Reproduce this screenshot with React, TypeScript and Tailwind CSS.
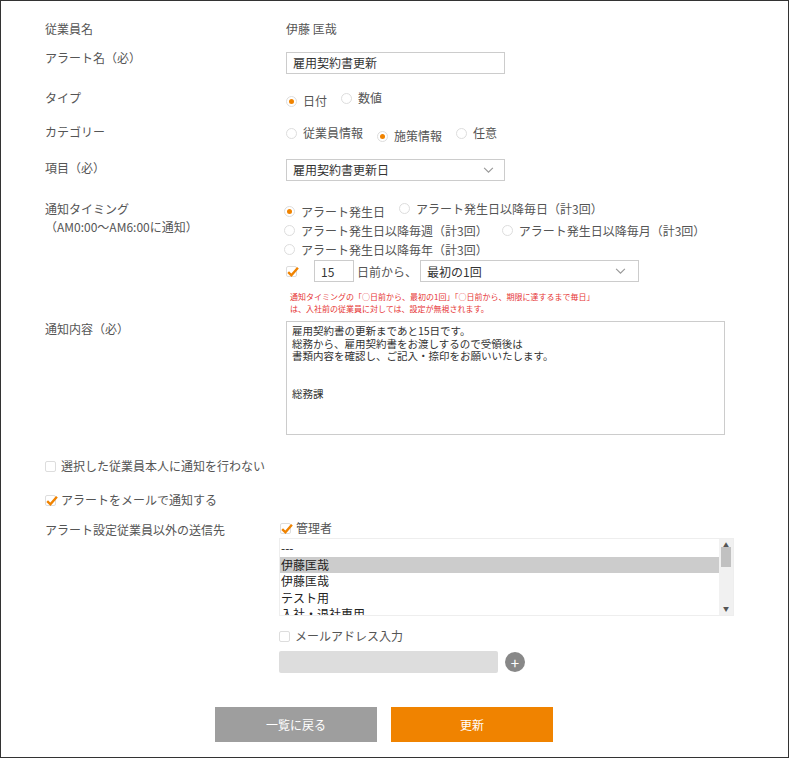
import React from 'react';

const Radio = ({ on, label }: { on?: boolean; label: string }) => (
  <span className="inline-flex items-center gap-[6px] mr-[14px]">
    <span className="w-[11px] h-[11px] rounded-full border border-[#ddd] bg-white flex items-center justify-center">
      {on && <span className="w-[5px] h-[5px] rounded-full bg-[#f08300]" />}
    </span>
    <span>{label}</span>
  </span>
);

const Check = ({ on, label }: { on?: boolean; label?: string }) => (
  <span className="inline-flex items-center gap-[5px]">
    <span className="w-[11px] h-[11px] rounded-[2px] border border-[#ddd] bg-white relative">
      {on && (
        <svg viewBox="0 0 12 12" className="absolute -left-[1px] -top-[2px] w-[13px] h-[13px]">
          <path d="M2 6.5 L5 9.5 L11 2.5" fill="none" stroke="#f08300" strokeWidth="2.2" />
        </svg>
      )}
    </span>
    {label && <span>{label}</span>}
  </span>
);

const Chevron = () => (
  <svg viewBox="0 0 12 8" className="w-[11px] h-[7px]">
    <path d="M1 1 L6 6 L11 1" fill="none" stroke="#999" strokeWidth="1.3" />
  </svg>
);

const Row = ({ label, h, children }: { label: React.ReactNode; h: string; children?: React.ReactNode }) => (
  <div className={`flex ${h}`}>
    <div className="w-[241px] shrink-0">{label}</div>
    <div className="flex-1">{children}</div>
  </div>
);

export default function App() {
  return (
    <div
      className="w-[789px] h-[758px] border border-[#333] bg-white text-[12px] text-[#555] pl-[44px] pt-[19px] leading-[18px]"
      style={{ fontFamily: '"Noto Sans CJK JP", "Noto Sans", sans-serif' }}
    >
      <Row label="従業員名" h="h-[29px]">伊藤 匡哉</Row>
      <Row label="アラート名（必）" h="h-[40px]">
        <div className="mt-[3px] w-[219px] h-[22px] border border-[#ccc] px-[6px] flex items-center text-[#333]">雇用契約書更新</div>
      </Row>
      <Row label="タイプ" h="h-[34px]">
        <div className="mt-[0px]"><Radio on label="日付" /><Radio label="数値" /></div>
      </Row>
      <Row label="カテゴリー" h="h-[36px]">
        <div className="mt-[1px]"><Radio label="従業員情報" /><Radio on label="施策情報" /><Radio label="任意" /></div>
      </Row>
      <Row label="項目（必）" h="h-[41px]">
        <div className="w-[219px] h-[22px] border border-[#ccc] px-[6px] flex items-center justify-between text-[#333]">
          雇用契約書更新日<span className="mr-[4px]"><Chevron /></span>
        </div>
      </Row>
      <Row label={<div>通知タイミング<br />（AM0:00〜AM6:00に通知）</div>} h="h-[120px]">
        <div className="flex flex-col gap-[2px] mt-[0px] leading-[17px]">
          <div className="-ml-[2px]"><Radio on label="アラート発生日" /><Radio label="アラート発生日以降毎日（計3回）" /></div>
          <div className="-ml-[2px]"><Radio label="アラート発生日以降毎週（計3回）" /><Radio label="アラート発生日以降毎月（計3回）" /></div>
          <div className="-ml-[2px]"><Radio label="アラート発生日以降毎年（計3回）" /></div>
          <div className="flex items-center h-[22px]">
            <Check on />
            <div className="ml-[17px] w-[40px] h-[22px] border border-[#ccc] px-[6px] flex items-center text-[#333]">15</div>
            <span className="mx-[3px]">日前から、</span>
            <div className="w-[219px] h-[22px] border border-[#ccc] px-[6px] flex items-center justify-between text-[#333]">
              最初の1回<span className="mr-[6px]"><Chevron /></span>
            </div>
          </div>
          <div className="text-[#e63535] text-[8px] leading-[12px] mt-[7px] ml-[4px]">
            通知タイミングの「○日前から、最初の1回」「○日前から、期限に達するまで毎日」<br />は、入社前の従業員に対しては、設定が無視されます。
          </div>
        </div>
      </Row>
      <Row label="通知内容（必）" h="h-[131px]">
        <div className="mt-[1px] w-[439px] h-[114px] border border-[#ccc] px-[5px] py-[3px] text-[#333] leading-[12.5px] text-[10.5px]">
          雇用契約書の更新まであと15日です。<br />総務から、雇用契約書をお渡しするので受領後は<br />書類内容を確認し、ご記入・捺印をお願いいたします。<br /><br /><br />総務課
        </div>
      </Row>
      <div className="h-[34px] pt-[6px]"><Check label="選択した従業員本人に通知を行わない" /></div>
      <div className="h-[32px] pt-[6px]"><Check on label="アラートをメールで通知する" /></div>
      <div className="flex">
        <div className="w-[234px] shrink-0 pt-[4px]">アラート設定従業員以外の送信先</div>
        <div className="flex-1">
          <div className="h-[20px] pt-[2px] ml-[1px]"><Check on label="管理者" /></div>
          <div className="mt-[1px] w-[455px] h-[78px] border border-[#eee] flex text-[#222] overflow-hidden">
            <div className="flex-1 leading-[16.5px] pt-[1px]">
              <div className="px-[1px]">---</div>
              <div className="px-[1px] bg-[#ccc]">伊藤匡哉</div>
              <div className="px-[1px]">伊藤匡哉</div>
              <div className="px-[1px]">テスト用</div>
              <div className="px-[1px]">入社・退社専用</div>
            </div>
            <div className="w-[14px] bg-[#f1f1f1] flex flex-col items-center justify-between py-[3px] text-[6px] text-[#555] leading-none">
              <span>▲</span>
              <div className="w-[10px] h-[20px] bg-[#c1c1c1] -mt-[40px]" />
              <span>▼</span>
            </div>
          </div>
          <div className="h-[35px] pt-[11px]"><Check label="メールアドレス入力" /></div>
          <div className="flex items-center gap-[7px]">
            <div className="w-[219px] h-[22px] bg-[#ddd] rounded-[2px]" />
            <div className="w-[20px] h-[20px] rounded-full bg-[#888] text-white flex items-center justify-center text-[15px] leading-none">+</div>
          </div>
        </div>
      </div>
      <div className="flex gap-[14px] ml-[170px] mt-[34px]">
        <div className="w-[162px] h-[35px] bg-[#9e9e9e] text-white flex items-center justify-center">一覧に戻る</div>
        <div className="w-[162px] h-[35px] bg-[#f08300] text-white flex items-center justify-center">更新</div>
      </div>
    </div>
  );
}
